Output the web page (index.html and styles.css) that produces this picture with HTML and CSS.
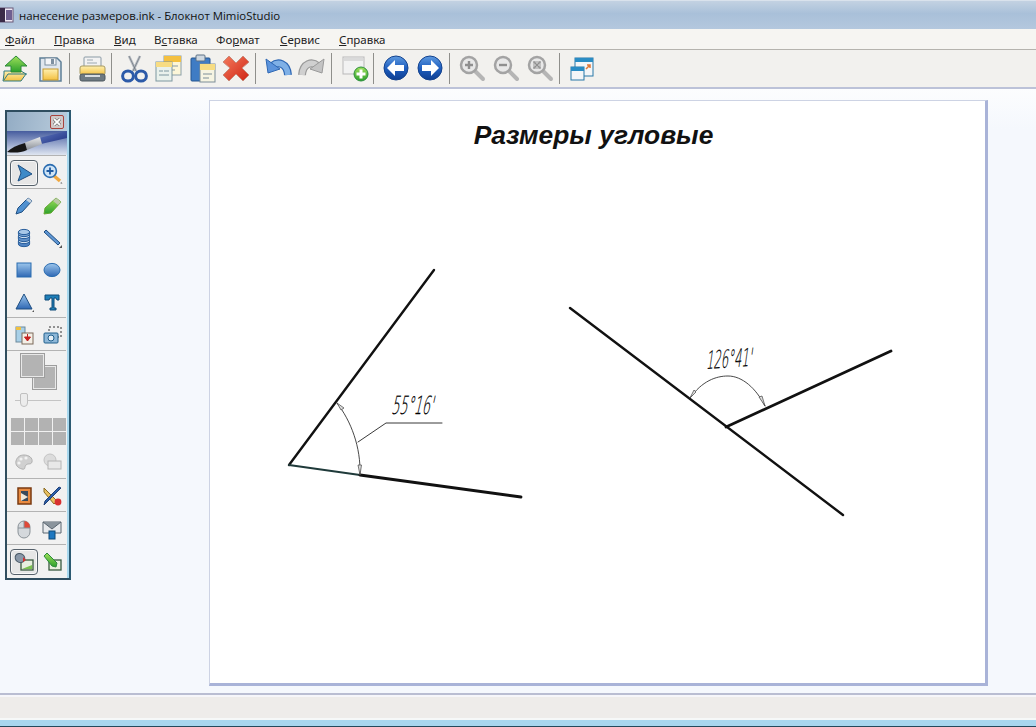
FILE: index.html
```html
<!DOCTYPE html>
<html lang="ru">
<head>
<meta charset="utf-8">
<title>нанесение размеров.ink - Блокнот MimioStudio</title>
<link rel="stylesheet" href="styles.css">
</head>
<body>
<svg class="defs" aria-hidden="true">
  <defs>
    <linearGradient id="gBlue" x1="0" y1="0" x2="0" y2="1"><stop offset="0" stop-color="#9cc6ec"/><stop offset="1" stop-color="#2f68b4"/></linearGradient>
    <linearGradient id="gBall" x1="0" y1="0" x2="0" y2="1"><stop offset="0" stop-color="#5f9be0"/><stop offset=".5" stop-color="#1f5fc0"/><stop offset="1" stop-color="#0f3f92"/></linearGradient>
    <linearGradient id="gGreen" x1="0" y1="0" x2="0" y2="1"><stop offset="0" stop-color="#9fe05a"/><stop offset="1" stop-color="#2ca02c"/></linearGradient>
    <linearGradient id="gYellow" x1="0" y1="0" x2="0" y2="1"><stop offset="0" stop-color="#fff0b0"/><stop offset="1" stop-color="#f4c040"/></linearGradient>
    <linearGradient id="gGray" x1="0" y1="0" x2="0" y2="1"><stop offset="0" stop-color="#eeeeee"/><stop offset="1" stop-color="#a8a8a8"/></linearGradient>
    <linearGradient id="gRed" x1="0" y1="0" x2="1" y2="1"><stop offset="0" stop-color="#f47a5c"/><stop offset="1" stop-color="#cf2414"/></linearGradient>
    <linearGradient id="gBrush" x1="0" y1="0" x2="1" y2="1"><stop offset="0" stop-color="#5f78c0"/><stop offset="1" stop-color="#1f3080"/></linearGradient>
    <linearGradient id="gFerrule" x1="0" y1="0" x2="0" y2="1"><stop offset="0" stop-color="#e8eaec"/><stop offset="1" stop-color="#8a8f96"/></linearGradient>
  </defs>
</svg>

<header class="titlebar">
  <svg class="app-icon" width="16" height="18" viewBox="0 0 16 18"><rect x="0" y="2" width="13" height="14" fill="#efe8f4" stroke="#6b5a78"/><rect x="0" y="2" width="5" height="14" fill="#3a2a48"/><rect x="6" y="4" width="6" height="10" fill="#6f5f90"/></svg>
  <span class="title-text">нанесение размеров.ink - Блокнот MimioStudio</span>
</header>

<nav class="menubar">
  <span class="menu-item m1"><u>Ф</u>айл</span>
  <span class="menu-item m2"><u>П</u>равка</span>
  <span class="menu-item m3"><u>В</u>ид</span>
  <span class="menu-item m4">В<u>с</u>тавка</span>
  <span class="menu-item m5">Фо<u>р</u>мат</span>
  <span class="menu-item m6"><u>С</u>ервис</span>
  <span class="menu-item m7"><u>С</u>правка</span>
</nav>

<div class="toolbar">
  <span class="tb"><svg width="32" height="32" viewBox="0 0 32 32"><path d="M4 20h17l5 3-5 7H3l1-7z" fill="url(#gYellow)" stroke="#2f7a80"/><path d="M4 29l4-6h19" fill="none" stroke="#2f7a80"/><path d="M16 5l11 10h-6v6h-10v-6H5z" fill="url(#gGreen)" stroke="#2d8a3a"/></svg></span>
  <span class="tb"><svg width="32" height="32" viewBox="0 0 32 32"><path d="M6 7h17l4 4v19H6z" fill="#dfe6ee" stroke="#5e7f97" stroke-width="1.5"/><rect x="11" y="7" width="11" height="7" fill="#f3f5f8" stroke="#7d8fa0"/><rect x="17" y="8" width="3" height="5" fill="#7d8fa0"/><rect x="9" y="18" width="15" height="11" fill="url(#gYellow)" stroke="#c69a30"/></svg></span>
  <span class="sep"></span>
  <span class="tb"><svg width="32" height="32" viewBox="0 0 32 32"><rect x="8" y="6" width="17" height="11" rx="1" fill="#f2f2f2" stroke="#8a9aa5"/><path d="M11 9h6M11 12h10" stroke="#9ca8b0"/><rect x="4" y="15" width="25" height="9" rx="2" fill="url(#gYellow)" stroke="#a89a60"/><rect x="4" y="23" width="25" height="7" rx="2" fill="#6e7a82" stroke="#4d585f"/><rect x="9" y="24" width="15" height="2" fill="#d8dde0"/></svg></span>
  <span class="sep"></span>
  <span class="tb"><svg width="32" height="32" viewBox="0 0 32 32"><path d="M11 5l7 15M22 5l-7 15" stroke="#b7bcc2" stroke-width="2.6" fill="none"/><path d="M11 5l7 15M22 5l-7 15" stroke="#5e666e" stroke-width=".6" fill="none"/><ellipse cx="10" cy="25" rx="5.4" ry="5" fill="none" stroke="#2c5aa8" stroke-width="3"/><ellipse cx="23" cy="25" rx="5.4" ry="5" fill="none" stroke="#2c5aa8" stroke-width="3"/></svg></span>
  <span class="tb"><svg width="32" height="32" viewBox="0 0 32 32"><rect x="12" y="5" width="17" height="19" fill="#fdf6d8" stroke="#8aa0a8"/><rect x="12" y="5" width="17" height="6" fill="#f4c040"/><path d="M18 15h8M18 19h5" stroke="#8a9aa5"/><rect x="4" y="11" width="16" height="19" fill="#e9f1ec" stroke="#7d97a0"/><rect x="4" y="11" width="16" height="5" fill="#f7dc82"/><path d="M7 20h4M12 20h5M7 24h10" stroke="#7d97a0"/></svg></span>
  <span class="tb"><svg width="32" height="32" viewBox="0 0 32 32"><rect x="5" y="7" width="19" height="23" rx="1" fill="#3f7cc4" stroke="#24558f"/><rect x="10" y="4" width="9" height="6" rx="1" fill="#cfd8e0" stroke="#5c7185"/><rect x="14" y="13" width="15" height="18" fill="#f6f4e2" stroke="#7d8e98"/><rect x="14" y="13" width="15" height="6" fill="#f7dc82"/><path d="M17 23h9M17 27h6" stroke="#7d8e98"/></svg></span>
  <span class="tb"><svg width="32" height="32" viewBox="0 0 32 32"><path d="M9 5l7 7 7-7 6 6-7 6 7 7-6 6-7-7-7 7-6-6 7-7-7-6z" fill="url(#gRed)" stroke="#c9897a"/></svg></span>
  <span class="sep"></span>
  <span class="tb"><svg width="32" height="32" viewBox="0 0 32 32"><path d="M10 15c6-5 15-3 16 9" fill="none" stroke="#2f68b4" stroke-width="8"/><path d="M10 15c6-5 15-3 16 9" fill="none" stroke="#7fb0e6" stroke-width="5.500"/><path d="M4 8l2 14 12-4z" fill="#5c94dc" stroke="#2f68b4"/></svg></span>
  <span class="tb"><svg width="32" height="32" viewBox="0 0 32 32"><path d="M22 15c-6-5-15-3-16 9" fill="none" stroke="#9a9a9a" stroke-width="8"/><path d="M22 15c-6-5-15-3-16 9" fill="none" stroke="#d0d0d0" stroke-width="5.500"/><path d="M28 8l-2 14-12-4z" fill="#c4c4c4" stroke="#9a9a9a"/></svg></span>
  <span class="sep"></span>
  <span class="tb"><svg width="32" height="32" viewBox="0 0 32 32"><rect x="5" y="6" width="21" height="17" fill="#f2f2f2" stroke="#b9b9b9"/><rect x="6" y="7" width="19" height="3" fill="#dadada"/><circle cx="23" cy="23" r="7" fill="url(#gGreen)" stroke="#2b8f3c"/><path d="M23 18.500v9M18.500 23h9" stroke="#fff" stroke-width="3"/></svg></span>
  <span class="sep"></span>
  <span class="tb"><svg width="32" height="32" viewBox="0 0 32 32"><circle cx="16" cy="17" r="12" fill="url(#gBall)" stroke="#14438e"/><path d="M7 17l8-8v5h9v6h-9v5z" fill="#fff"/></svg></span>
  <span class="tb"><svg width="32" height="32" viewBox="0 0 32 32"><circle cx="16" cy="17" r="12" fill="url(#gBall)" stroke="#14438e"/><path d="M25 17l-8-8v5H8v6h9v5z" fill="#fff"/></svg></span>
  <span class="sep"></span>
  <span class="tb"><svg width="32" height="32" viewBox="0 0 32 32"><path d="M19 20l8 8" stroke="#b5b5b5" stroke-width="4" stroke-linecap="round"/><circle cx="13" cy="14" r="8" fill="#e8e8e8" stroke="#a3a3a3" stroke-width="2.500"/><path d="M13 10v8M9 14h8" stroke="#8f8f8f" stroke-width="2.400"/></svg></span>
  <span class="tb"><svg width="32" height="32" viewBox="0 0 32 32"><path d="M19 20l8 8" stroke="#b5b5b5" stroke-width="4" stroke-linecap="round"/><circle cx="13" cy="14" r="8" fill="#e8e8e8" stroke="#a3a3a3" stroke-width="2.500"/><path d="M9 14h8" stroke="#8f8f8f" stroke-width="2.400"/></svg></span>
  <span class="tb"><svg width="32" height="32" viewBox="0 0 32 32"><path d="M19 20l8 8" stroke="#b5b5b5" stroke-width="4" stroke-linecap="round"/><circle cx="13" cy="14" r="8" fill="#e8e8e8" stroke="#a3a3a3" stroke-width="2.500"/><path d="M9.500 10.500l7 7M16.500 10.500l-7 7" stroke="#8f8f8f" stroke-width="1.600"/><rect x="10" y="11" width="6" height="6" fill="none" stroke="#9a9a9a"/></svg></span>
  <span class="sep"></span>
  <span class="tb"><svg width="32" height="32" viewBox="0 0 32 32"><rect x="9" y="7" width="18" height="18" fill="#f4f6f8" stroke="#2878a8"/><rect x="9" y="7" width="18" height="4" fill="#2a8cc4"/><rect x="5" y="16" width="13" height="13" fill="#f4f6f8" stroke="#2878a8"/><rect x="5" y="16" width="13" height="4" fill="#2a8cc4"/><path d="M20 18l4-4M21 14h3v3" fill="none" stroke="#e07838" stroke-width="1.500"/></svg></span>
</div>

<main class="workspace">
  <aside class="palette">
    <div class="pal-head">
      <span class="pal-close"><svg width="12" height="12" viewBox="0 0 12 12"><path d="M3 3l6 6M9 3l-6 6" stroke="#555" stroke-width="3"/><path d="M3 3l6 6M9 3l-6 6" stroke="#fff" stroke-width="1.800"/></svg></span>
    </div>
    <div class="pal-banner">
      <svg width="60" height="24" viewBox="0 0 60 24"><path d="M60 0L32 7 34 13 60 7z" fill="url(#gBrush)"/><path d="M33 6L17 12 20 19 35 13z" fill="url(#gFerrule)"/><path d="M18 12C10 14 4 17 0 21c6 1 14 1 20-2z" fill="#161616"/></svg>
    </div>
    <section class="pal-row first">
      <span class="pal-btn on"><svg width="20" height="20" viewBox="0 0 20 20"><path d="M4 2L18 11 4 18 7 10z" fill="#3d8ac8" stroke="#1f4f82"/></svg></span>
      <span class="pal-btn"><svg width="22" height="22" viewBox="0 0 22 22"><path d="M12 13l7 6" stroke="#f0a840" stroke-width="3.400"/><path d="M20 20l1.500 1.500-2 0z" fill="#555"/><circle cx="9" cy="9" r="6.400" fill="#cfe4f6" stroke="#2a6cb0" stroke-width="1.600"/><path d="M9 5.500v7M5.500 9h7" stroke="#1f5aa0" stroke-width="1.800"/></svg></span>
    </section>
    <section class="pal-row tools">
      <span class="pal-btn"><svg width="22" height="22" viewBox="0 0 22 22"><path d="M3 19l2-6L15 3l4 3-10 11z" fill="#4f90d0" stroke="#1f4f82"/><path d="M15 3l4 3-2 2-4-3z" fill="#c8d4e0"/></svg></span>
      <span class="pal-btn"><svg width="22" height="22" viewBox="0 0 22 22"><path d="M3 19l1-6L15 3l5 4-10 11z" fill="url(#gGreen)" stroke="#63a830"/><path d="M15 3l5 4-3 3-5-4z" fill="#bcc8a8"/></svg></span>
      <span class="pal-btn"><svg width="22" height="22" viewBox="0 0 22 22"><path d="M5.400 14v3c0 3.500 11.200 3.500 11.200 0v-3z" fill="#4f84c4" stroke="#2a5f9c"/><ellipse cx="11" cy="14" rx="5.600" ry="2.600" fill="#d8e6f4" stroke="#2a5f9c"/><path d="M5.400 9v3c0 3.500 11.200 3.500 11.200 0V9z" fill="#5f90c8" stroke="#2a5f9c"/><ellipse cx="11" cy="9" rx="5.600" ry="2.600" fill="#d8e6f4" stroke="#2a5f9c"/><path d="M5.400 5v2c0 3.500 11.200 3.500 11.200 0V5" fill="#78a4d4" stroke="#2a5f9c"/><ellipse cx="11" cy="5" rx="5.600" ry="2.600" fill="#a8c8e8" stroke="#2a5f9c"/></svg></span>
      <span class="pal-btn"><svg width="22" height="22" viewBox="0 0 22 22"><path d="M3 5l2-2 14 13-2 2z" fill="#5f96d4" stroke="#1f4f82"/><path d="M21 18v3h-3z" fill="#555"/></svg></span>
      <span class="pal-btn"><svg width="22" height="22" viewBox="0 0 22 22"><rect x="4" y="4" width="14" height="14" fill="url(#gBlue)" stroke="#2a6cb0"/></svg></span>
      <span class="pal-btn"><svg width="22" height="22" viewBox="0 0 22 22"><ellipse cx="11" cy="11" rx="8" ry="6.600" fill="url(#gBlue)" stroke="#2a6cb0"/></svg></span>
      <span class="pal-btn"><svg width="22" height="22" viewBox="0 0 22 22"><path d="M11 3l8 15H3z" fill="url(#gBlue)" stroke="#1f4f82"/><path d="M21 19v2h-2z" fill="#555"/></svg></span>
      <span class="pal-btn"><svg width="22" height="22" viewBox="0 0 22 22"><path d="M4 4h14v5h-2l-1-2h-2v10h2v2H9v-2h2V7H9L8 9H4z" fill="#1f7fb8" stroke="#0f4a78"/></svg></span>
    </section>
    <section class="pal-row">
      <span class="pal-btn"><svg width="22" height="22" viewBox="0 0 22 22"><rect x="3" y="3" width="9" height="15" fill="#a8d0e8" stroke="#6c8a9c"/><rect x="3" y="3" width="5" height="3" fill="#f0c040"/><rect x="9" y="9" width="11" height="11" fill="#f4efe6" stroke="#7d6a5a"/><path d="M14.500 10v5M11.500 13l3 4 3-4z" stroke="#c02020" fill="#d02020"/></svg></span>
      <span class="pal-btn"><svg width="22" height="22" viewBox="0 0 22 22"><rect x="8" y="3" width="12" height="10" fill="none" stroke="#333" stroke-dasharray="2 2"/><rect x="3" y="9" width="14" height="10" rx="1" fill="#8fb8d8" stroke="#1f5f8c"/><circle cx="10" cy="14" r="3" fill="#e8f0f6" stroke="#1f5f8c"/></svg></span>
    </section>
    <section class="pal-row colors">
      <div class="swatches"><span class="swatch back"></span><span class="swatch front"></span></div>
      <div class="slider"><span class="slider-knob"></span></div>
      <div class="grid-colors">
        <i></i><i></i><i></i><i></i><i></i><i></i><i></i><i></i>
      </div>
      <div class="colors-icons">
        <span class="pal-btn"><svg width="22" height="22" viewBox="0 0 22 22"><path d="M11 4c5 0 9 3 8 7-1 3-4 1-6 3s0 5-4 4c-4-1-7-4-6-8 1-4 4-6 8-6z" fill="#d0d0d0" stroke="#b0b0b0"/><circle cx="8" cy="8" r="1.600" fill="#f2f2f2"/><circle cx="13" cy="7" r="1.600" fill="#f2f2f2"/><circle cx="6" cy="12" r="1.600" fill="#f2f2f2"/></svg></span>
        <span class="pal-btn"><svg width="22" height="22" viewBox="0 0 22 22"><circle cx="9" cy="9" r="6" fill="#dcdcdc" stroke="#c4c4c4"/><rect x="7" y="10" width="13" height="8" fill="#e8e8e8" stroke="#b4b4b4"/></svg></span>
      </div>
    </section>
    <section class="pal-row">
      <span class="pal-btn"><svg width="22" height="22" viewBox="0 0 22 22"><rect x="5" y="3" width="13" height="16" fill="#e88a40" stroke="#7a3a10" stroke-width="1.500"/><rect x="8" y="6" width="7" height="10" fill="#3a4a5a"/><path d="M8 8l7 4-7 4z" fill="#f0e8d8"/></svg></span>
      <span class="pal-btn"><svg width="22" height="22" viewBox="0 0 22 22"><path d="M3 3l13 13-3 3L3 7z" fill="#e8c060" stroke="#8a6a20"/><path d="M20 3L6 17l-3 3 1-4L18 2z" fill="#2a5fa8" stroke="#1f3f78"/><circle cx="17" cy="17" r="3.400" fill="#d83030"/></svg></span>
    </section>
    <section class="pal-row">
      <span class="pal-btn"><svg width="22" height="22" viewBox="0 0 22 22"><rect x="5" y="3" width="12" height="17" rx="6" fill="#d4d8dc" stroke="#8a9298"/><path d="M11 3a6 6 0 0 1 6 6v1h-6z" fill="#e04838"/><path d="M5 10h12M11 3v7" stroke="#8a9298"/></svg></span>
      <span class="pal-btn"><svg width="22" height="22" viewBox="0 0 22 22"><path d="M2 4h18v11H2z" fill="#e8eaec" stroke="#5a6670"/><path d="M2 4l9 7 9-7" fill="#8a949c" stroke="#5a6670"/><rect x="8" y="13" width="6" height="8" fill="#1f78c0" stroke="#0f4a78"/></svg></span>
    </section>
    <section class="pal-row last">
      <span class="pal-btn on"><svg width="22" height="22" viewBox="0 0 22 22"><rect x="8" y="9" width="12" height="10" fill="#e8efe0" stroke="#3a5a40" stroke-width="1.300"/><path d="M9 18l10-4v4z" fill="#7ac050"/><ellipse cx="7" cy="7" rx="5" ry="4.400" fill="#8a98a8" stroke="#4a5a68" transform="rotate(35 7 7)"/><path d="M10 6l3 3-3 2z" fill="#d83030"/></svg></span>
      <span class="pal-btn"><svg width="22" height="22" viewBox="0 0 22 22"><rect x="8" y="9" width="12" height="10" fill="#e8efe0" stroke="#3a5a40" stroke-width="1.300"/><path d="M3 5l3-3 10 10-1 4-4-1z" fill="url(#gGreen)" stroke="#2c8a3c"/></svg></span>
    </section>
  </aside>

  <article class="page">
    <h1 class="page-title">Размеры угловые</h1>
    <svg class="drawing" width="777" height="584" viewBox="210 101 777 584">
      <g fill="none" stroke="#111" stroke-linecap="round">
        <path d="M434 270L289 465" stroke-width="2.400"/>
        <path d="M289 465L360 475" stroke-width="2" stroke="#1f3a3a"/>
        <path d="M360 475L521 497" stroke-width="2.800"/>
        <path d="M570 308L843 515" stroke-width="2.400"/>
        <path d="M726 427L891 351" stroke-width="2.800"/>
        <path d="M337 403C351 421 361 447 360 475" stroke-width=".9" stroke="#333"/>
        <path d="M358 442L386 423H442" stroke-width=".9" stroke="#222"/>
        <path d="M690 398C702 381 716 376 728 376C742 376 756 388 765 406" stroke-width=".9" stroke="#333"/>
      </g>
      <g fill="#ddd" stroke="#444" stroke-width=".7">
        <path d="M337 403l7 5-3 2z"/>
        <path d="M360 475l-2-10 3.500 0z"/>
        <path d="M690 398l4-8 2 2z"/>
        <path d="M765 406l-6-9 3-1z"/>
      </g>
      <text class="dim" textLength="42" lengthAdjust="spacingAndGlyphs" transform="matrix(1 0 -.22 1 391 414)">55°16'</text>
      <text class="dim" textLength="46" lengthAdjust="spacingAndGlyphs" transform="matrix(.996 -.07 -.14 1 706 369)">126°41'</text>
    </svg>
  </article>
</main>

<footer class="statusbar"></footer>
<div class="taskbar-edge"></div>
</body>
</html>
```
FILE: styles.css
```css
* { box-sizing: border-box; }
html, body { margin: 0; padding: 0; }
body {
  width: 1036px;
  height: 727px;
  overflow: hidden;
  display: flex;
  flex-direction: column;
  background: #f5f8fd;
  font-family: "Open Sans", "Noto Sans", sans-serif;
  color: #1c1c1c;
}
.defs { display: block; width: 0; height: 0; flex: none; }

.titlebar {
  flex: none;
  height: 29px;
  display: flex;
  align-items: center;
  background: linear-gradient(#c3d2e2 0, #a9c0d9 45%, #b4c8de 100%);
  border-top: 1px solid #d9e2ec;
}
.app-icon { margin: 0 3px 0 0; flex: none; }
.title-text { font-size: 11.4px; color: #111; white-space: nowrap; }

.menubar {
  flex: none;
  height: 21px;
  display: flex;
  align-items: center;
  background: #f6f5f2;
  border-bottom: 1px solid #b5b3ae;
  font-family: "Noto Sans", sans-serif;
  font-size: 11.5px;
  color: #222;
  padding-left: 5px;
}
.menu-item { flex: none; white-space: nowrap; }
.m1 { width: 49px; }
.m2 { width: 60px; }
.m3 { width: 40px; }
.m4 { width: 62px; }
.m5 { width: 64px; }
.m6 { width: 59px; }

.toolbar {
  flex: none;
  height: 39px;
  display: flex;
  align-items: flex-start;
  padding-top: 1px;
  background: #f2f1ee;
  border-bottom: 2px solid #bcc2d8;
}
.tb { flex: none; width: 34px; height: 32px; padding-right: 2px; display: block; }
.tb svg { display: block; }
.sep { flex: none; width: 1px; height: 31px; margin: 2px 6px 0 1px; background: #8f8f8b; }

.workspace {
  flex: 1;
  position: relative;
  background: linear-gradient(#fcfdfe 0, #f5f8fd 40px);
  padding: 11px 0 0 209px;
  border-bottom: 2px solid #b9bdd2;
}
.page {
  width: 779px;
  height: 586px;
  position: relative;
  background: #fff;
  border: 1px solid #cdd3e4;
  border-right: 3px solid #a9b3d8;
  border-bottom: 3px solid #a9b3d8;
}
.page-title {
  margin: 0;
  padding: 19px 8px 0 0;
  text-align: center;
  font-family: "Liberation Sans", Arial, sans-serif;
  font-style: italic;
  font-weight: 700;
  font-size: 26.4px;
  line-height: 30px;
  color: #111;
}
.drawing { position: absolute; left: 0; top: 0; }
.dim {
  font-family: "DejaVu Sans", "Liberation Sans", sans-serif;
  font-weight: 200;
  font-size: 25px;
  fill: #000;
  stroke: #000;
  stroke-width: .25px;
}

.palette {
  position: absolute;
  left: 5px;
  top: 21px;
  width: 66px;
  height: 470px;
  display: flex;
  flex-direction: column;
  background: #f1f1f1;
  border: 2px solid #2f4d5f;
  border-right-color: #2c5a72;
  box-shadow: inset -2px 0 0 #a8d8ee;
}
.pal-head {
  flex: none;
  height: 19px;
  display: flex;
  justify-content: flex-end;
  align-items: center;
  padding-right: 3px;
  margin-right: 2px;
  background: linear-gradient(100deg, #93acc4, #b9ccdc);
}
.pal-close {
  width: 14px;
  height: 14px;
  display: flex;
  align-items: center;
  justify-content: center;
  background: #cfc8c8;
  border: 1px solid #a8433d;
  border-radius: 2px;
}
.pal-banner {
  flex: none;
  height: 24px;
  margin-right: 2px;
  background: linear-gradient(#465c9e, #a8b6d6 65%, #dfe5f0);
  display: flex;
}
.pal-row {
  flex: none;
  display: grid;
  grid-template-columns: 28px 28px;
  justify-content: start;
  padding: 1px 0 0 3px;
  margin-right: 3px;
  border-top: 1px solid #b3b3b3;
  height: 33px;
  grid-auto-rows: 32px;
}
.pal-row.first { height: 33px; }
.pal-row.tools { height: 129px; }
.pal-row.colors { height: 128px; display: block; padding: 0; }
.pal-row.last { height: 34px; border-bottom: 0; }
.pal-btn {
  width: 28px;
  height: 26px;
  margin-top: 3px;
  display: flex;
  align-items: center;
  justify-content: center;
}
.pal-btn.on {
  background: #e6e6e6;
  border: 1px solid #55606a;
  border-radius: 4px;
  box-shadow: inset 0 0 0 1px #f8f8f8;
}
.swatches { position: relative; height: 37px; margin: 2px 0 0 13px; }
.swatch { position: absolute; width: 25px; height: 25px; background: #b3b3b3; border: 1px solid #9d9d9d; box-shadow: inset 0 0 0 1px #e8e8e8; }
.swatch.back { left: 12px; top: 12px; }
.swatch.front { left: 0; top: 0; }
.slider { position: relative; height: 21px; margin: -2px 5px 2px 8px; background: linear-gradient(#c4c4c4, #c4c4c4) center 12px / 100% 1px no-repeat; }
.slider-knob { position: absolute; left: 5px; top: 5px; width: 8px; height: 14px; background: #ececec; border: 1px solid #c0c0c0; border-radius: 2px 2px 4px 4px; }
.grid-colors {
  display: grid;
  grid-template-columns: repeat(4, 13px);
  grid-auto-rows: 13px;
  gap: 1px;
  margin: 9px 0 0 4px;
}
.grid-colors i { display: block; background: #b2b2b2; }
.colors-icons { display: grid; grid-template-columns: 28px 28px; padding: 1px 0 0 3px; }

.statusbar {
  flex: none;
  height: 25px;
  background: #eeecea;
  border-top: 2px solid #f6f6fa;
  border-bottom: 2px solid #f6f8f8;
}
.taskbar-edge {
  flex: none;
  height: 7px;
  background: #a9d6ee;
  border-bottom: 1px solid #24495c;
}
```
